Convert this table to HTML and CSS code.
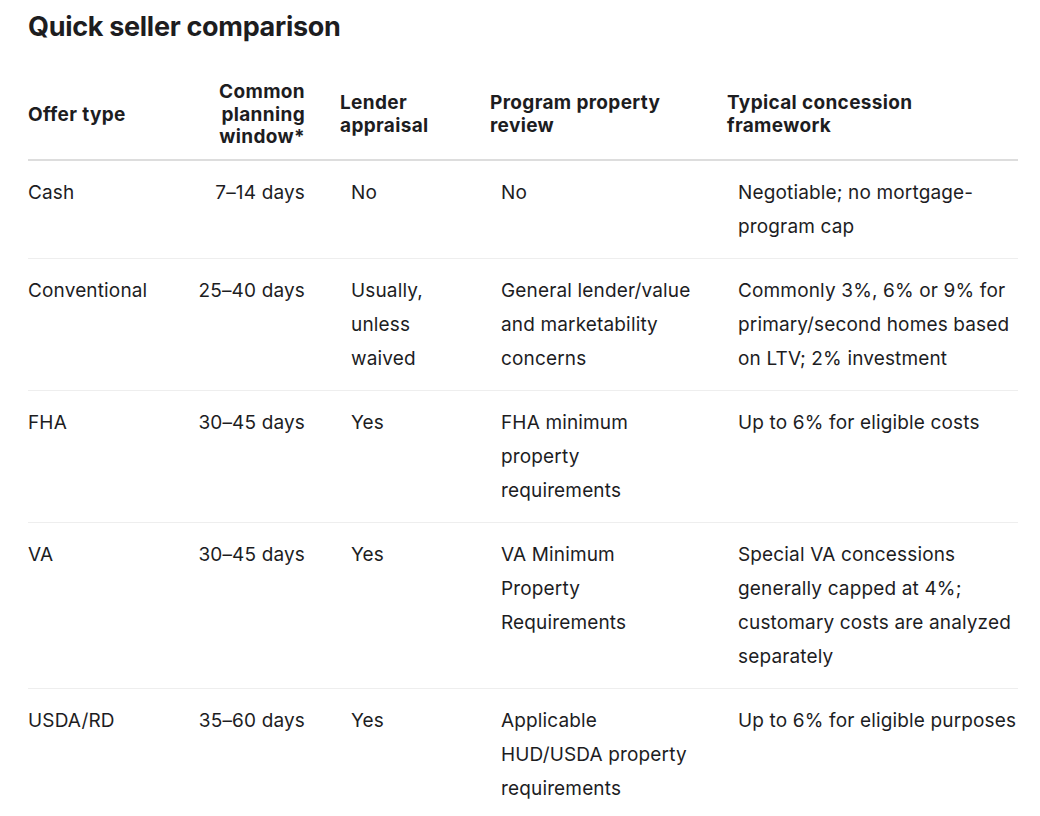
FILE: index.html
```html
<!DOCTYPE html>
<html lang="en">
<head>
<meta charset="utf-8">
<title>Quick seller comparison</title>
<link rel="stylesheet" href="styles.css">
</head>
<body>
<section class="page">
  <h2 class="title">Quick seller comparison</h2>
  <table class="cmp">
    <colgroup>
      <col class="c1"><col class="c2"><col class="c3"><col class="c4"><col class="c5">
    </colgroup>
    <thead>
      <tr>
        <th class="h1">Offer type</th>
        <th class="h2">Common<br>planning<br>window*</th>
        <th class="h3">Lender<br>appraisal</th>
        <th class="h4">Program property<br>review</th>
        <th class="h5">Typical concession<br>framework</th>
      </tr>
    </thead>
    <tbody>
      <tr>
        <td class="d1">Cash</td>
        <td class="d2">7–14 days</td>
        <td class="d3">No</td>
        <td class="d4">No</td>
        <td class="d5">Negotiable; no mortgage-<br>program cap</td>
      </tr>
      <tr>
        <td class="d1">Conventional</td>
        <td class="d2">25–40 days</td>
        <td class="d3">Usually,<br>unless<br>waived</td>
        <td class="d4">General lender/value<br>and marketability<br>concerns</td>
        <td class="d5">Commonly 3%, 6% or 9% for<br>primary/second homes based<br>on LTV; 2% investment</td>
      </tr>
      <tr>
        <td class="d1">FHA</td>
        <td class="d2">30–45 days</td>
        <td class="d3">Yes</td>
        <td class="d4">FHA minimum<br>property<br>requirements</td>
        <td class="d5">Up to 6% for eligible costs</td>
      </tr>
      <tr>
        <td class="d1">VA</td>
        <td class="d2">30–45 days</td>
        <td class="d3">Yes</td>
        <td class="d4">VA Minimum<br>Property<br>Requirements</td>
        <td class="d5">Special VA concessions<br>generally capped at 4%;<br>customary costs are analyzed<br>separately</td>
      </tr>
      <tr class="last">
        <td class="d1">USDA/RD</td>
        <td class="d2">35–60 days</td>
        <td class="d3">Yes</td>
        <td class="d4">Applicable<br>HUD/USDA property<br>requirements</td>
        <td class="d5">Up to 6% for eligible purposes</td>
      </tr>
    </tbody>
  </table>
</section>
</body>
</html>
```

FILE: styles.css
```css
html, body {
  margin: 0;
  padding: 0;
  background: #ffffff;
}
body {
  font-family: Inter, "Noto Sans", "Liberation Sans", sans-serif;
  color: #1d1d1f;
}
.page {
  padding: 10px 22px 0 28px;
}
.title {
  margin: 0;
  font-size: 27px;
  line-height: 34px;
  font-weight: 700;
  letter-spacing: -0.3px;
}
.cmp {
  margin-top: 37px;
  width: 990px;
  border-collapse: collapse;
  table-layout: fixed;
}
.c1 { width: 150px; }
.c2 { width: 162px; }
.c3 { width: 150px; }
.c4 { width: 237px; }
.c5 { width: 291px; }
.cmp th {
  font-size: 19px;
  line-height: 22.5px;
  font-weight: 700;
  letter-spacing: 0.35px;
  text-align: left;
  vertical-align: middle;
  padding: 0 0 10px 0;
  border-bottom: 2px solid #dddddd;
}
.cmp th.h2 { text-align: right; padding-right: 35px; }
.cmp td {
  font-size: 19px;
  line-height: 34px;
  letter-spacing: 0.15px;
  vertical-align: top;
  padding: 15px 0 14px 11px;
  border-bottom: 1px solid #eeeeee;
  white-space: nowrap;
}
.cmp td.d1 { padding-left: 0; }
.cmp td.d2 { text-align: right; padding-left: 0; padding-right: 35px; }
.cmp tr.last td { border-bottom: none; }
```
